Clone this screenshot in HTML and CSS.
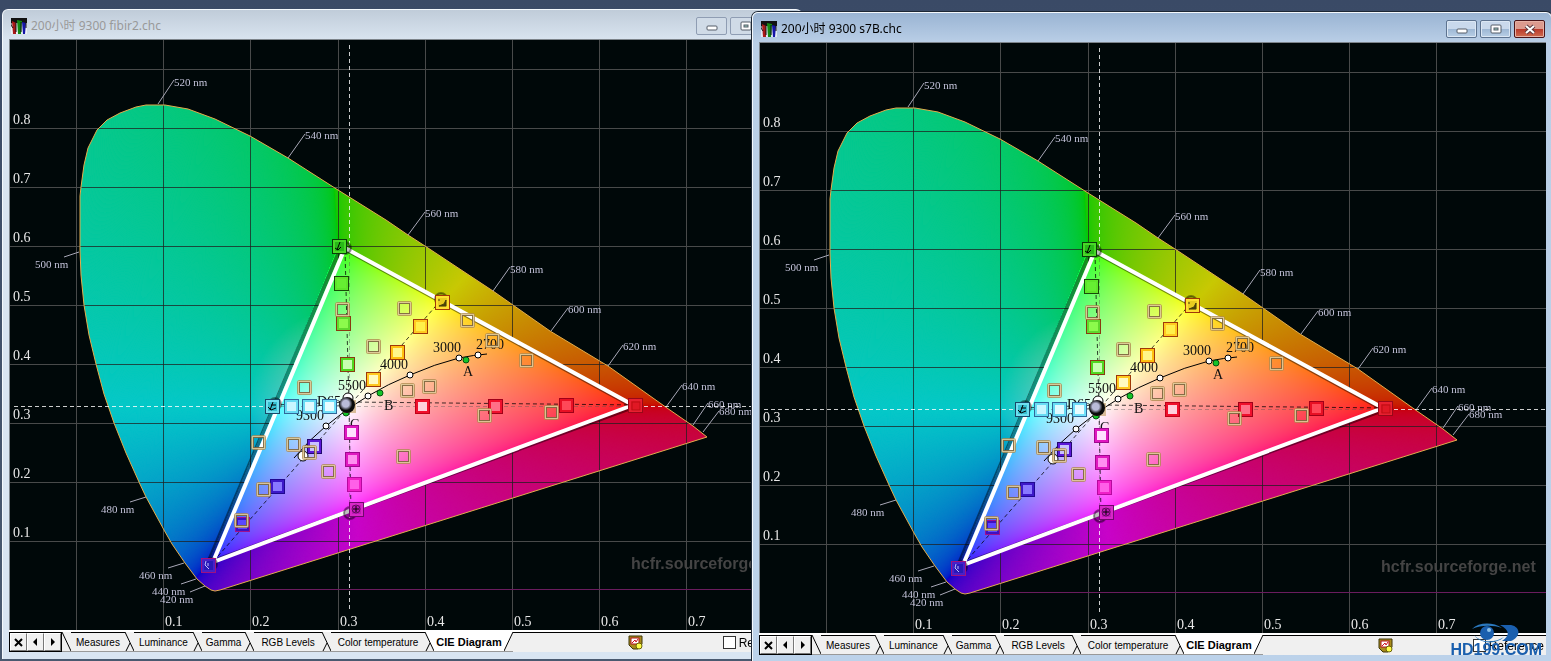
FILE: index.html
```html
<!DOCTYPE html>
<html lang="zh">
<head>
  <meta charset="UTF-8" />
  <meta name="viewport" content="width=device-width, initial-scale=1.0"/>
  <title>CIE Diagram</title>
  <link rel="stylesheet" href="styles.css">
</head>
<body>
  <main class="desktop">
    <section class="window window-back" data-title="200小时 9300 fibir2.chc"></section>
    <section class="window window-front" data-title="200小时 9300 s7B.chc"></section>

    <div class="site-mark">
      <svg class="site-eye" width="50" height="20" viewBox="0 0 50 20">
        <path d="M1 6C8-1 22-1 31 5C22 2 10 2 1 6Z" fill="#2a78bd"/>
        <path d="M3 12C10 20 24 20 33 14C25 22 9 21 3 12Z" fill="#2a78bd"/>
        <circle cx="16" cy="10" r="7" fill="#1a5fae"/>
        <circle cx="18" cy="7" r="2" fill="#8cc2ea"/>
        <path d="M29 2H40C50 4 50 14 40 18H31C39 13 39 7 29 2Z" fill="#1a5fae"/>
      </svg>
      <span>HD199.COM</span>
    </div>
  </main>

  <!-- Window contents, cloned for each measure file -->
  <template id="windowTemplate">
    <header class="titlebar">
      <svg class="app-icon" width="16" height="16" viewBox="0 0 16 16">
        <rect width="16" height="16" fill="#fff" fill-opacity=".6"/>
        <rect width="16" height="5" fill="#111"/>
        <path d="M1 3L5 5V16H2Z" fill="#a81818"/>
        <path d="M6 2L11 3L10 16H7Z" fill="#128a12"/>
        <path d="M11 4L15 5L14 16H12Z" fill="#1414a8"/>
        <path d="M0 0V7L2 10M5 5V14M10 4V14M15 4V10" stroke="#111" fill="none"/>
      </svg>
      <h1 class="title"></h1>
      <div class="window-buttons">
        <button class="win-btn" aria-label="Minimize">
          <svg width="12" height="11" viewBox="0 0 12 11"><rect x="1" y="5" width="10" height="4" rx="1" fill="#fff" stroke="#555d69"/></svg>
        </button>
        <button class="win-btn" aria-label="Maximize">
          <svg width="12" height="11" viewBox="0 0 12 11"><rect x="1" y="1" width="10" height="8" rx="1" fill="#fff" stroke="#555d69"/><rect x="4" y="4" width="4" height="2" fill="#9cb" stroke="#555d69"/></svg>
        </button>
        <button class="win-btn win-close" aria-label="Close">
          <svg width="12" height="11" viewBox="0 0 12 11"><path d="M2 2L10 9M10 2L2 9" stroke="#5b3a3f" stroke-width="4"/><path d="M2 2L10 9M10 2L2 9" stroke="#fff" stroke-width="2"/></svg>
        </button>
      </div>
    </header>

    <div class="chart">
      <canvas class="gamut" width="786" height="590"></canvas>
      <svg class="overlay" viewBox="10 40 786 590"></svg>
    </div>

    <footer class="bottom-bar">
      <div class="tab-nav">
        <button aria-label="Close tab"><svg width="9" height="9" viewBox="0 0 9 9"><path d="M1 1L8 8M8 1L1 8" stroke="#000" stroke-width="2"/></svg></button>
        <button aria-label="Previous"><svg width="9" height="9" viewBox="0 0 9 9"><path d="M6 0V8L2 4Z"/></svg></button>
        <button aria-label="Next"><svg width="9" height="9" viewBox="0 0 9 9"><path d="M3 0V8L7 4Z"/></svg></button>
      </div>
      <nav class="tabs">
        <svg class="slant" viewBox="0 0 9 19"><path d="M0 0L9 19"/></svg>
        <button class="tab">Measures</button>
        <svg class="slant" viewBox="0 0 9 19"><path d="M0 0L9 19M1 19L5 11"/></svg>
        <button class="tab">Luminance</button>
        <svg class="slant" viewBox="0 0 9 19"><path d="M0 0L9 19M1 19L5 11"/></svg>
        <button class="tab tab-narrow">Gamma</button>
        <svg class="slant" viewBox="0 0 9 19"><path d="M0 0L9 19M1 19L5 11"/></svg>
        <button class="tab tab-wide">RGB Levels</button>
        <svg class="slant" viewBox="0 0 9 19"><path d="M0 0L9 19M1 19L5 11"/></svg>
        <button class="tab tab-wide">Color temperature</button>
        <svg class="slant" viewBox="0 0 9 19"><path class="fill" d="M0 0H9V19Z"/><path d="M0 0L9 19M1 19L5 11"/></svg>
        <button class="tab tab-active">CIE Diagram</button>
        <svg class="slant" viewBox="0 0 9 19"><path class="fill" d="M0 0H9L0 19Z"/><path d="M9 0L0 19"/></svg>
      </nav>
      <div class="status">
        <svg width="15" height="15" viewBox="0 0 15 15">
          <path d="M1 1H14V9L10 14H5L1 10Z" fill="#a98b1c" stroke="#3d3508"/>
          <rect x="3" y="3" width="8" height="6" fill="#fff" stroke="#b3121d"/>
          <path d="M4 8L7 5L8 7L10 4" stroke="#d01020" fill="none"/>
          <circle cx="11" cy="11" r="3" fill="#ffff4a" stroke="#6a6408"/>
        </svg>
        <label class="reference"><input type="checkbox">Reference</label>
      </div>
    </footer>
  </template>

  <script src="script.js"></script>
</body>
</html>
```

FILE: styles.css
```css
* {
  box-sizing: border-box;
}

body {
  margin: 0;
  font-family: "Liberation Sans", Arial, sans-serif;
  background: #3b4b67;
}

.desktop {
  position: relative;
  min-height: 100vh;
  overflow: hidden;
  background: linear-gradient(#3a4a66, #4a5a70);
}

.window {
  position: absolute;
  padding: 0 5px 7px 6px;
  border: 1px solid #f4f8fc;
  border-bottom: none;
  border-radius: 6px 6px 0 0;
}

.window-back {
  top: 9px;
  left: 2px;
  right: 749px;
  background: linear-gradient(#c0ccd9, #d9e4f0 30px, #d9e5f2);
}

.window-front {
  top: 12px;
  left: 752px;
  right: -1px;
  background: linear-gradient(#9ab4d3, #bacfe7 30px, #bcd2ea);
  box-shadow: 0 0 0 1px #1d2735;
}

.titlebar {
  display: flex;
  align-items: center;
  height: 29px;
  padding: 3px 1px 0 2px;
}

.title {
  flex: 1;
  margin: 0 0 0 4px;
  font: 12px/16px "Noto Sans", "Noto Sans CJK SC", sans-serif;
  color: #000;
}

.window-back .title {
  color: #999;
}

.window-buttons {
  display: flex;
  gap: 3px;
}

.win-btn {
  display: flex;
  align-items: center;
  justify-content: center;
  width: 31px;
  height: 18px;
  padding: 0;
  border: 1px solid #5d7390;
  border-radius: 2px;
  background: linear-gradient(#c9d9ec 50%, #9db7d4 50%, #b9cfe6);
  box-shadow: inset 0 0 0 1px #dbe7f4;
}

.window-back .win-btn {
  border-color: #8f9db3;
  background: #d0dbe7;
  box-shadow: none;
}

.win-close {
  border-color: #4a1418;
  background: linear-gradient(#dc9a8e 50%, #b9382a 50%, #cf6d50);
  box-shadow: inset 0 0 0 1px #e6b0a4;
}

/* Chart: colours on a canvas, lines and markers above it */
.chart {
  display: grid;
  border-top: 1px solid #7d848b;
  border-left: 1px solid #7d848b;
  background: #000809;
}

.gamut, .overlay {
  grid-area: 1 / 1;
  display: block;
  width: 100%;
  height: auto;
}

.grid { stroke: #484a4a; }
.grid-inner { stroke: #202020; stroke-opacity: 0.75; }
.purple { stroke: #6a1c5e; }
.locus { fill: none; stroke: #e2ac4c; }
.tick { stroke: #a9a9b8; }
.cross { stroke: #fff; stroke-opacity: 0.8; stroke-dasharray: 4 3; }
.cross-inner { stroke: #555; stroke-opacity: 0.4; stroke-dasharray: 4 3; }
.dash { fill: none; stroke: #000; stroke-opacity: 0.75; stroke-dasharray: 4 3; }
.gamut-ref { fill: none; stroke: #000; stroke-opacity: 0.45; stroke-width: 4; }
.gamut-measured { fill: none; stroke: #fff; stroke-width: 4; }
.blackbody { fill: none; stroke: #000; stroke-width: 1; }
.bb-dot { fill: #fff; stroke: #000; }
.std-dot { fill: #14c428; stroke: #045010; }
.measure { fill: #000; fill-opacity: 0.25; stroke: #000; stroke-opacity: 0.4; stroke-width: 2; }
.checker { fill: none; stroke: #b08c50; stroke-opacity: 0.8; stroke-width: 3; }
.checker-line { fill: none; stroke: #ecdcae; stroke-opacity: 0.7; }
.checker-inner { fill: none; stroke: #6f5c3c; stroke-opacity: 0.7; }
.axis, .nm, .temp { font-family: "Liberation Serif", "Times New Roman", serif; }
.axis { font-size: 14px; fill: #e8e8e8; }
.nm { font-size: 11px; fill: #c3c3da; }
.temp { font-size: 14px; fill: #111; }
.credit { font: bold 16px "Liberation Sans", Arial, sans-serif; fill: #444; }

/* Bottom bar */
.bottom-bar {
  display: flex;
  height: 22px;
  border-top: 2px solid #fff;
  background: #f0f0f0;
}

.tab-nav {
  display: flex;
  border: 1px solid #000;
}

.tab-nav button {
  display: flex;
  align-items: center;
  justify-content: center;
  width: 17px;
  padding: 0;
  border: 1px solid;
  border-color: #fff #777 #777 #fff;
  background: #f0f0f0;
}

.tabs {
  display: flex;
  border-bottom: 1px solid #999;
}

.slant {
  width: 9px;
  height: 19px;
  fill: none;
  stroke: #000;
}

.slant .fill {
  fill: #fff;
  stroke: none;
}

.tab {
  padding: 1px 5px 0;
  border: none;
  border-top: 1px solid #000;
  background: #f0f0f0;
  font: 10px/17px "Liberation Sans", Arial, sans-serif;
  color: #000;
  white-space: nowrap;
}

.tab-narrow {
  padding: 1px 4px 0;
}

.tab-wide {
  padding: 1px 7px 0;
}

.tab-active {
  padding: 1px 2px 0;
  border-top-color: #fff;
  background: #fff;
  font-size: 11px;
  font-weight: bold;
}

.status {
  display: flex;
  flex: 1;
  align-items: center;
  padding-left: 115px;
  border-top: 1px solid #000;
}

.reference {
  display: flex;
  align-items: center;
  gap: 3px;
  margin-left: auto;
  padding-right: 2px;
  font-size: 12px;
}

.reference input {
  appearance: none;
  width: 13px;
  height: 13px;
  margin: 0;
  border: 1px solid #333;
  background: #fff;
}

.site-mark {
  position: absolute;
  right: 9px;
  bottom: 5px;
  display: flex;
  flex-direction: column;
  align-items: center;
  font-size: 16px;
  line-height: 13px;
  font-weight: bold;
  color: #1a5fae;
}
```

FILE: script.js
```js
const AXIS = { x0: 76, y0: 600, sx: 872, sy: 590 };
const VIEW = { x: 10, y: 40, w: 786, h: 590 };

const LOCUS = [
  [80,196],[80,250],[81,275],[84,305],[89,335],[96,364],[104,394],[114,423],[126,453],[139,482],
  [146,497],[164,530],[172,544],[185,563],[197,579],[205,586],[211,590],[215,591],[220,590],
  [707,437],[693,426],[667,408],[608,366],[550,331],[493,291],[425,246],[408,235],[386,220],
  [338,190],[288,158],[250,136],[215,119],[188,109],[165,105],[146,105],[136,107],[120,113],
  [107,120],[97,130],[88,148],[84,165],[81,187]
];

// label, tick start, tick end, text position
const WAVELENGTHS = [
  ['520 nm', 158,104, 174,80, 174,86], ['540 nm', 288,158, 305,134, 305,139],
  ['560 nm', 408,235, 425,212, 425,217], ['580 nm', 493,291, 510,267, 510,273],
  ['600 nm', 551,331, 568,308, 568,313], ['620 nm', 608,366, 623,345, 623,350],
  ['640 nm', 666,407, 682,385, 682,390], ['660 nm', 693,425, 708,403, 708,408],
  ['680 nm', 703,432, 719,411, 719,415], ['500 nm', 79,252, 64,257, 35,268],
  ['480 nm', 146,497, 130,502, 101,513], ['460 nm', 184,563, 168,568, 139,579],
  ['440 nm', 196,579, 181,584, 152,595], ['420 nm', 205,586, 190,592, 160,603]
];

const TEMPS = [
  ['3000', 433,352], ['2700', 476,349], ['4000', 380,369], ['5500', 338,390],
  ['9300', 296,420], ['D65', 317,406], ['A', 463,376], ['B', 384,410], ['C', 350,429]
];

const CHECKER = [
  [342,309],[373,346],[404,308],[467,320],[492,340],[526,360],[407,390],[429,386],[304,387],
  [258,442],[293,444],[309,452],[328,471],[263,489],[241,520],[403,456],[484,415],[551,412]
];

// x, y, fill, inner border, outer border
const SATURATIONS = [
  [341,283,'#66ee32','#5ee62a','#174b08'], [343,323,'#8cfa4c','#5fd82e','#8a3a10'], [347,364,'#c8ffb0','#50d820','#8a3a10'],
  [420,326,'#fff04a','#ffca20','#a03808'], [397,352,'#fff68a','#ffc010','#a03808'], [373,379,'#fffac0','#ffc820','#a03808'],
  [422,406,'#ffd0dc','#f0102c','#c00018'], [495,406,'#ff7088','#f0102c','#a00018'], [566,405,'#ff4858','#e81024','#a00018'],
  [314,446,'#c8c0ff','#5a18d8','#240870'], [277,486,'#8878ff','#3c18c8','#200890'], [242,524,'#5a48ff','#4010c0','#a01090'],
  [351,432,'#ffe0ff','#e018c0','#a00890'], [352,459,'#ff90f0','#e018c0','#a00890'], [354,484,'#ff60e8','#f020c8','#b808a0'],
  [291,406,'#c8f6ff','#68dcf4','#30689a'], [309,406,'#e0faff','#68dcf4','#30689a'], [329,406,'#e8fcff','#70e0fa','#30689a']
];

const PRIMARIES = [
  [339,246,'#28b818','#48d828','#0a3c08'], [442,302,'#e8cc20','#ffe030','#a03808'],
  [635,405,'#e01824','#e82030','#980818'], [208,565,'#2818b8','#4820c8','#a01080'],
  [356,509,'#c018b8','#d828c8','#70086c'], [272,406,'#38c0d0','#70e0f0','#184868']
];

function toLinear(x, y) {
  const X = x / y, Z = (1 - x - y) / y;
  const rgb = [
    3.2406 * X - 1.5372 - 0.4986 * Z,
    -0.9689 * X + 1.8758 + 0.0415 * Z,
    0.0557 * X - 0.2040 + 1.0570 * Z
  ];
  return rgb;
}

// Colour of a chromaticity; outside the RGB triangle the hue of its edge is used, darker
function colorAt(x, y) {
  const wx = 0.3127, wy = 0.329;
  let rgb = toLinear(x, Math.max(y, 0.001));
  let level = 255, pale = 0;
  if (Math.min(...rgb) < 0) {
    let lo = 0, hi = 1;
    for (let i = 0; i < 12; i++) {
      const t = (lo + hi) / 2;
      const c = toLinear(wx + (x - wx) * t, Math.max(wy + (y - wy) * t, 0.001));
      if (Math.min(...c) < 0) hi = t; else lo = t;
    }
    rgb = toLinear(wx + (x - wx) * lo, wy + (y - wy) * lo);
    level = 200;
    const d = Math.hypot((x - wx) * AXIS.sx, (y - wy) * AXIS.sy);
    pale = Math.max(0, 1 - d / 100);
  }
  const max = Math.max(...rgb);
  return rgb.map(v => {
    const g = Math.pow(Math.max(0, v) / max, 1 / 2.2);
    return level * Math.min(1, g + (1 - g) * pale);
  });
}

function drawGamut(canvas) {
  const ctx = canvas.getContext('2d');
  const img = ctx.createImageData(VIEW.w, VIEW.h);
  for (let py = 0; py < VIEW.h; py++) {
    for (let px = 0; px < VIEW.w; px++) {
      const x = (px + VIEW.x - AXIS.x0) / AXIS.sx;
      const y = (AXIS.y0 - py - VIEW.y) / AXIS.sy;
      if (x > 0.74 || y < 0) continue;
      const c = colorAt(x, y);
      const i = (py * VIEW.w + px) * 4;
      img.data[i] = c[0];
      img.data[i + 1] = c[1];
      img.data[i + 2] = c[2];
      img.data[i + 3] = 255;
    }
  }
  ctx.putImageData(img, 0, 0);
  ctx.globalCompositeOperation = 'destination-in';
  ctx.beginPath();
  LOCUS.forEach(p => ctx.lineTo(p[0] - VIEW.x, p[1] - VIEW.y));
  ctx.fill();
}

function gridLines(cls, extra) {
  let d = '';
  for (let i = 0; i < 8; i++) d += `M${Math.round(AXIS.x0 + i * 87.2) + 0.5} 40V630`;
  for (let i = 1; i < 10; i++) d += `M10 ${Math.round(AXIS.y0 - i * 59) + 0.5}H796`;
  return `<path class="${cls}" d="${d}" ${extra}/>`;
}

function square(m) {
  const [x, y, fill, inner, outer] = m;
  return `<rect x="${x - 7}" y="${y - 7}" width="15" height="15" fill="${outer}"/>
    <rect x="${x - 6}" y="${y - 6}" width="13" height="13" fill="${inner}"/>
    <rect x="${x - 4}" y="${y - 4}" width="9" height="9" fill="${fill}"/>`;
}

function checker(p) {
  const [x, y] = p;
  return `<rect class="checker" x="${x - 5.5}" y="${y - 5.5}" width="12" height="12" rx="1"/>
    <rect class="checker-line" x="${x - 5.5}" y="${y - 5.5}" width="12" height="12"/>
    <rect class="checker-inner" x="${x - 4.5}" y="${y - 4.5}" width="10" height="10"/>`;
}

function drawOverlay(svg, index) {
  const points = LOCUS.map(p => p.join(',')).join(' ');
  const triangle = 'M345 248L633 405L213 562Z';
  let s = `<defs>
    <clipPath id="ring${index}"><path clip-rule="evenodd" d="M${points.replace(/ /g, 'L')}Z${triangle}"/></clipPath>
    <clipPath id="outside${index}"><path clip-rule="evenodd" d="M10 40H796V630H10Z${triangle}"/></clipPath>
    <clipPath id="outer${index}"><path clip-rule="evenodd" d="M10 40H796V630H10ZM${points.replace(/ /g, 'L')}Z"/></clipPath>
    <clipPath id="inside${index}"><path d="${triangle}"/></clipPath>
    <radialGradient id="ball${index}" cx=".42" cy=".42" r=".6"><stop offset=".35" stop-color="#b9bbd8"/><stop offset=".7" stop-color="#0a0a0a"/></radialGradient>
  </defs>`;

  // the grid is lighter around the diagram, darker on it and absent in the measured triangle
  s += gridLines('grid', `clip-path="url(#outer${index})"`);
  s += gridLines('grid-inner', `clip-path="url(#ring${index})"`);
  s += '<path class="purple" d="M222 589.5H796"/>';
  s += `<polygon class="locus" points="${points}"/>`;

  WAVELENGTHS.forEach(w => {
    s += `<path class="tick" d="M${w[1]} ${w[2]}L${w[3]} ${w[4]}"/><text class="nm" x="${w[5]}" y="${w[6]}">${w[0]}</text>`;
  });
  for (let i = 1; i < 9; i++) s += `<text class="axis" x="13" y="${596 - i * 59}">0.${i}</text>`;
  for (let i = 1; i < 8; i++) s += `<text class="axis" x="${Math.round(78 + i * 87.2)}" y="626">0.${i}</text>`;
  s += '<text class="credit" x="631" y="569">hcfr.sourceforge.net</text>';

  const cross = 'M14 406.5H796M349.5 45V610';
  s += `<path class="cross" d="${cross}" clip-path="url(#outside${index})"/>`;
  s += `<path class="cross-inner" d="${cross}" clip-path="url(#inside${index})"/>`;
  s += '<polygon class="gamut-ref" points="341,247 634,407 208,563"/>';
  s += '<polygon class="gamut-measured" points="345,248 633,405 213,562"/>';
  s += '<path class="dash" d="M345 250L349 406L351 512M441 300L349 406L212 563M274 405L349 402L640 405"/>';
  [[345,248],[441,299],[275,404],[350,513],[211,564]].forEach(p => {
    s += `<circle class="measure" cx="${p[0]}" cy="${p[1]}" r="6"/>`;
  });

  TEMPS.forEach(t => {
    s += `<text class="temp" x="${t[1]}" y="${t[2]}">${t[0]}</text>`;
  });
  s += '<path class="blackbody" d="M294 458Q310 439 326 426Q347 408 368 396Q388 384 410 375Q435 364 459 358Q474 355 487 354"/>';
  s += '<circle class="bb-dot" cx="303" cy="456" r="5"/><circle class="bb-dot" cx="348" cy="398" r="5"/>';
  [[326,426],[368,396],[410,375],[459,358],[478,355]].forEach(p => {
    s += `<circle class="bb-dot" cx="${p[0]}" cy="${p[1]}" r="3"/>`;
  });
  [[380,393],[466,360],[346,413]].forEach(p => {
    s += `<circle class="std-dot" cx="${p[0]}" cy="${p[1]}" r="3"/>`;
  });

  s += SATURATIONS.map(square).join('');
  s += CHECKER.map(checker).join('');
  s += PRIMARIES.map(square).join('');

  // symbols inside the primary and secondary targets
  s += `<g fill="none" stroke="#000">
    <path d="M340 242L337 250M335 248L338 250L341 247"/>
    <path d="M273 402L270 410M268 407L271 410L276 408M271 405H276"/>
    <circle cx="356" cy="509" r="4" stroke-opacity=".5"/><path d="M353 509H359M356 506V512"/>
    <path d="M439 299V301M439 306H446V300L444 304Z" fill="#4a4208" stroke="#4a4208"/>
    <path d="M206 561L205 565L209 569M208 563V566" stroke="#c0c0ff"/>
    <rect x="632" y="402" width="8" height="8" stroke="#900" stroke-opacity=".5"/>
  </g>`;
  s += `<rect x="343" y="400" width="13" height="13" fill="#c09a5c" fill-opacity=".6"/>`;
  s += `<circle cx="347" cy="405" r="8" fill="url(#ball${index})"/>`;
  svg.innerHTML = s;
}

const template = document.getElementById('windowTemplate');

document.querySelectorAll('.window').forEach((win, index) => {
  win.appendChild(template.content.cloneNode(true));
  win.querySelector('.title').textContent = win.dataset.title;
  drawGamut(win.querySelector('.gamut'));
  drawOverlay(win.querySelector('.overlay'), index);
});
```
